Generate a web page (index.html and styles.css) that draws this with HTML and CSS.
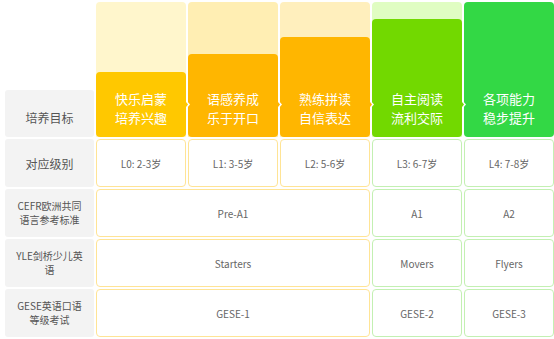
FILE: index.html
```html
<!DOCTYPE html>
<html lang="zh">
<head>
<meta charset="utf-8">
<link rel="stylesheet" href="styles.css">
</head>
<body>
<div class="table">
  <div class="label label-head">培养目标</div>
  <div class="head head-1"><div class="box box-1"><span>快乐启蒙</span><span>培养兴趣</span></div></div>
  <div class="head head-2"><div class="box box-2"><span>语感养成</span><span>乐于开口</span></div></div>
  <div class="head head-3"><div class="box box-3"><span>熟练拼读</span><span>自信表达</span></div></div>
  <div class="head head-4"><div class="box box-4"><span>自主阅读</span><span>流利交际</span></div></div>
  <div class="head head-5"><div class="box box-5"><span>各项能力</span><span>稳步提升</span></div></div>

  <div class="label">对应级别</div>
  <div class="cell">L0: 2-3岁</div>
  <div class="cell">L1: 3-5岁</div>
  <div class="cell">L2: 5-6岁</div>
  <div class="cell green">L3: 6-7岁</div>
  <div class="cell green">L4: 7-8岁</div>

  <div class="label small">CEFR欧洲共同<br>语言参考标准</div>
  <div class="cell span3">Pre-A1</div>
  <div class="cell green">A1</div>
  <div class="cell green">A2</div>

  <div class="label small">YLE剑桥少儿英<br>语</div>
  <div class="cell span3">Starters</div>
  <div class="cell green">Movers</div>
  <div class="cell green">Flyers</div>

  <div class="label small">GESE英语口语<br>等级考试</div>
  <div class="cell span3">GESE-1</div>
  <div class="cell green">GESE-2</div>
  <div class="cell green">GESE-3</div>
</div>
</body>
</html>
```

FILE: styles.css
```css
html, body {
  margin: 0;
  padding: 0;
  background: #ffffff;
}
body {
  padding: 2px 0 0 5px;
  font-family: "Noto Sans CJK SC", "Noto Sans", sans-serif;
}
.table {
  display: grid;
  grid-template-columns: 89px repeat(5, 90px);
  grid-template-rows: 135px repeat(4, 48px);
  gap: 2px;
}
.label {
  background: #f3f3f3;
  border-radius: 3px;
  display: flex;
  align-items: center;
  justify-content: center;
  text-align: center;
  font-size: 12px;
  color: #555555;
}
.label-head {
  align-self: end;
  height: 47px;
  padding-top: 7px;
  box-sizing: border-box;
}
.label.small {
  font-size: 10px;
  line-height: 14px;
}
.head {
  display: flex;
  flex-direction: column;
  justify-content: flex-end;
  border-radius: 4px 4px 0 0;
}
.head-1 { background: #fff6cc; }
.head-2 { background: #ffeeb3; }
.head-3 { background: #ffefbd; }
.head-4 { background: #e0fdc2; }
.head-5 { background: transparent; }
.box {
  position: relative;
  border-radius: 4px;
  display: flex;
  flex-direction: column;
  justify-content: flex-end;
  align-items: center;
  text-align: center;
  box-sizing: border-box;
  padding-bottom: 10px;
  color: #ffffff;
  font-size: 13px;
  line-height: 19px;
}
.box span {
  display: block;
}
.box-1 { height: 65px; background: #ffc800; }
.box-2 { height: 83px; background: #ffb600; }
.box-3 { height: 100px; background: #ffb600; }
.box-4 { height: 118px; background: #72d900; }
.box-5 { height: 135px; background: #33d845; }
.box-1::before, .box-2::before, .box-3::before, .box-4::before {
  content: "";
  position: absolute;
  right: -4px;
  bottom: 28px;
  width: 4px;
  height: 9px;
  background: #ffffff;
  clip-path: polygon(0 0, 100% 50%, 0 100%);
  z-index: 2;
}
.box-1::after, .box-2::after, .box-3::after, .box-4::after {
  content: "";
  position: absolute;
  right: -2px;
  bottom: 30px;
  width: 2px;
  height: 5px;
  background: inherit;
  clip-path: polygon(0 0, 100% 50%, 0 100%);
  z-index: 3;
}
.cell {
  background: #ffffff;
  border: 1.5px solid #ffe495;
  border-radius: 4px;
  display: flex;
  align-items: center;
  justify-content: center;
  font-size: 10px;
  color: #666666;
}
.cell.green {
  border-color: #c3f0b2;
}
.span3 {
  grid-column: span 3;
}
```
